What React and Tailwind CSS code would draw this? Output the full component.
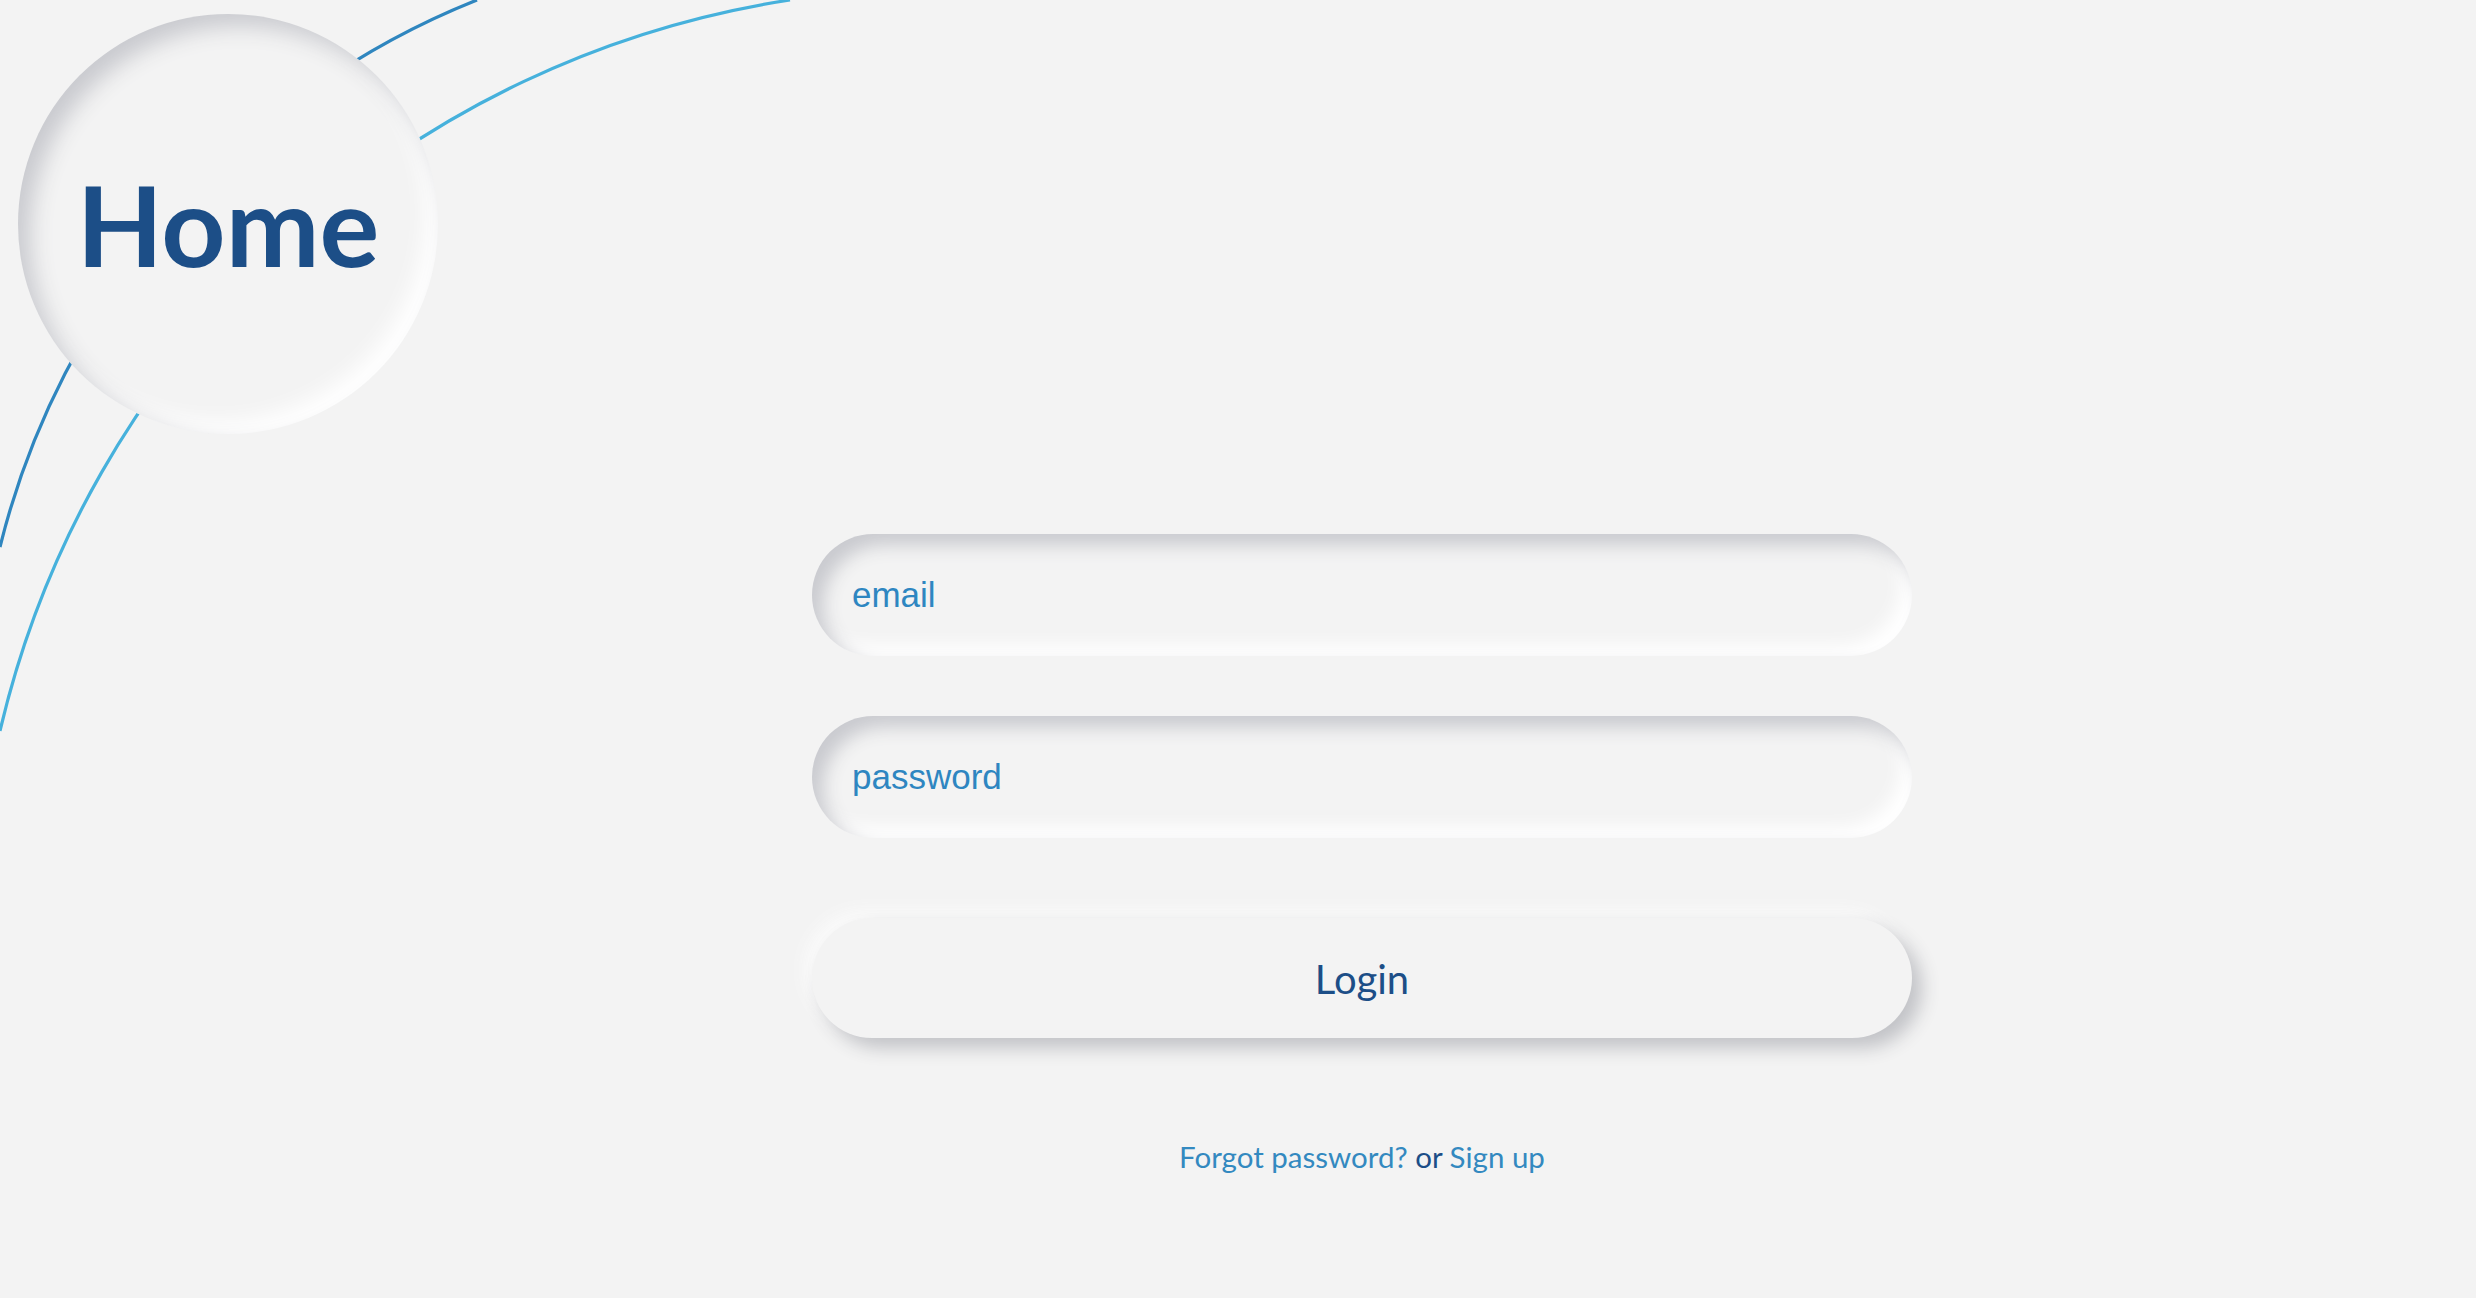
function Arcs() {
  return (
    <svg
      className="pointer-events-none absolute inset-0"
      width="2476"
      height="1298"
      viewBox="0 0 2476 1298"
      fill="none"
    >
      <path d="M 477 0 A 793 793 0 0 0 0 547" stroke="#2f86bf" strokeWidth="3.2" />
      <path d="M 790 0 A 960 960 0 0 0 0 731" stroke="#46b1dc" strokeWidth="3.2" />
    </svg>
  );
}

export default function App() {
  return (
    <div className="relative min-h-screen w-full overflow-hidden bg-[#f3f3f3] font-['Lato',sans-serif]">
      <Arcs />

      <header className="relative px-[18px] pt-[14px]">
        <div className="flex h-[420px] w-[420px] items-center justify-center rounded-full bg-[#f3f3f3] shadow-[inset_12px_12px_22px_#c9cacf,inset_-12px_-12px_22px_#ffffff]">
          <h1 className="text-[112px] font-bold leading-none text-[#1c4e87]">Home</h1>
        </div>
      </header>

      <main className="relative ml-[812px] mt-[100px] flex w-[1100px] flex-col">
        <input
          type="email"
          placeholder="email"
          className="h-[122px] w-full rounded-full bg-[#f3f3f3] pl-[40px] font-['Liberation_Sans',Arial,sans-serif] text-[35px] text-[#2e86c1] outline-none shadow-[inset_11px_11px_18px_#c9cacf,inset_-11px_-11px_18px_#ffffff] placeholder:text-[#2e86c1]"
        />
        <input
          type="password"
          placeholder="password"
          className="mt-[60px] h-[122px] w-full rounded-full bg-[#f3f3f3] pl-[40px] font-['Liberation_Sans',Arial,sans-serif] text-[35px] text-[#2e86c1] outline-none shadow-[inset_11px_11px_18px_#c9cacf,inset_-11px_-11px_18px_#ffffff] placeholder:text-[#2e86c1]"
        />
        <button
          type="button"
          className="mt-[80px] h-[120px] w-full rounded-full bg-[#f3f3f3] pt-[2px] text-[40px] text-[#1c4e87] shadow-[10px_10px_18px_#c2c3c7,-8px_-8px_16px_#fafafa]"
        >
          Login
        </button>

        <p className="mt-[101px] text-center text-[29.5px] leading-[1.2] text-[#1c4e87]">
          <a href="#" className="text-[#3389c0]">Forgot password?</a> or{' '}
          <a href="#" className="text-[#3389c0]">Sign up</a>
        </p>
      </main>
    </div>
  );
}
